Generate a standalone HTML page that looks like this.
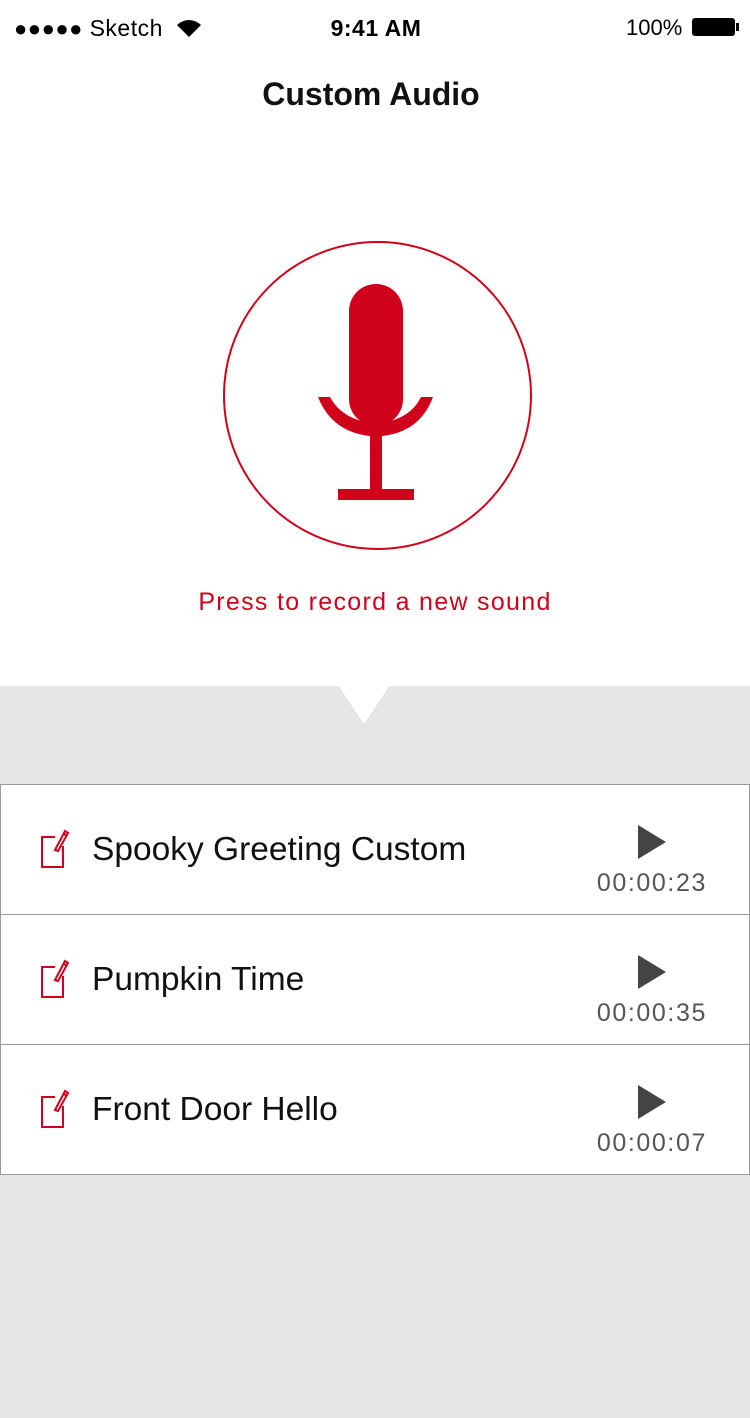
<!DOCTYPE html>
<html><head><style>
body{margin:0;width:750px;height:1418px;background:#e5e5e5;font-family:"Liberation Sans",sans-serif;position:relative;overflow:hidden}
.top{position:absolute;left:0;top:0;width:750px;height:686px;background:#fff}
.abs{position:absolute}
.row{position:absolute;left:0;width:748px;height:129px;background:#fff;border:1px solid #9a9a9a}
.t{position:absolute;left:91px;top:46px;font-size:33.5px;color:#111}
.tm{position:absolute;right:42px;top:84px;font-size:25px;color:#555;letter-spacing:1.6px}
</style></head><body>
<div class="top"></div>
<div class="abs" style="left:14px;top:15px;font-size:22px;color:#000;letter-spacing:0.5px">●●●●● <span style="font-size:23px">Sketch</span></div>
<svg class="abs" style="left:176px;top:18px" width="26" height="20" viewBox="0 0 26 20"><path d="M1 7 A17 17 0 0 1 25 7 L13 19Z" fill="#000"/></svg>
<div class="abs" style="left:0;width:752px;text-align:center;top:15px;font-size:23px;font-weight:bold;letter-spacing:0.5px">9:41 AM</div>
<div class="abs" style="left:626px;top:15px;font-size:22px">100%</div>
<div class="abs" style="left:692px;top:18px;width:43px;height:18px;background:#000;border-radius:3px"></div>
<div class="abs" style="left:736px;top:23px;width:3px;height:8px;background:#000"></div>
<div class="abs" style="left:0;width:742px;text-align:center;top:76px;font-size:32px;font-weight:bold;color:#111">Custom Audio</div>
<div class="abs" style="left:223px;top:241px;width:305px;height:305px;border:2px solid #d0021b;border-radius:50%"></div>
<svg class="abs" style="left:0;top:0" width="750" height="760">
<rect x="349" y="284" width="54" height="142" rx="27" fill="#d0021b"/>
<path d="M318 397 L330 397 Q342 420 376 424 Q410 420 421 397 L433 397 Q420 432 382 436 L370 436 Q332 432 318 397Z" fill="#d0021b"/>
<rect x="370" y="430" width="12" height="62" fill="#d0021b"/>
<rect x="338" y="489" width="76" height="11" fill="#d0021b"/>
<polygon points="338,685 390,685 364,724" fill="#fff"/>
</svg>
<div class="abs" style="left:0;width:750px;text-align:center;top:588px;font-size:25px;color:#d0021b;letter-spacing:1.3px">Press to record a new sound</div>

<div class="row" style="top:784px"><div class="t">Spooky Greeting Custom</div><div class="tm">00:00:23</div></div>
<div class="row" style="top:914px"><div class="t">Pumpkin Time</div><div class="tm">00:00:35</div></div>
<div class="row" style="top:1044px"><div class="t">Front Door Hello</div><div class="tm">00:00:07</div></div>
<svg class="abs" style="left:0;top:0" width="750" height="1200">
<g id="ic" fill="none" stroke="#d0021b" stroke-width="2">
<path d="M55 837 H42 V867 H63 V846"/>
<path d="M55 850 L65 831 L68 833 L58 851 Z M64 834 L67 836"/>
</g>
<use href="#ic" y="130"/><use href="#ic" y="260"/>
<polygon points="638,825 666,842 638,859" fill="#444"/>
<polygon points="638,955 666,972 638,989" fill="#444"/>
<polygon points="638,1085 666,1102 638,1119" fill="#444"/>
</svg>
</body></html>
